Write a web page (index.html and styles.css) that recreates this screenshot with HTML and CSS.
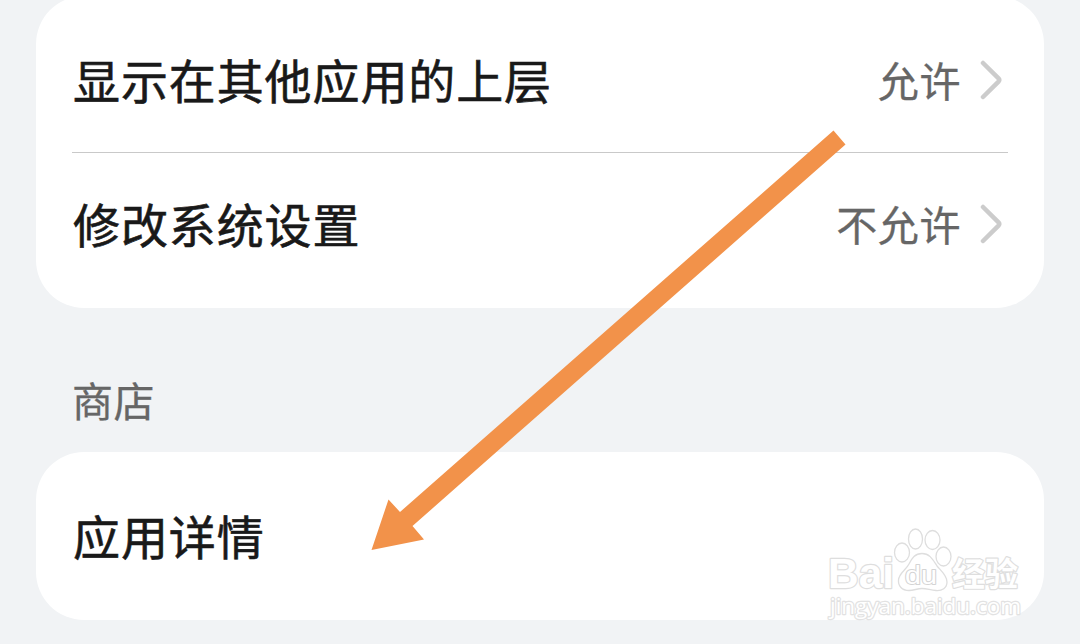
FILE: index.html
```html
<!DOCTYPE html>
<html lang="zh-CN">
<head>
  <meta charset="UTF-8">
  <meta name="viewport" content="width=device-width, initial-scale=1.0">
  <title>应用设置</title>
  <link rel="stylesheet" href="styles.css">
</head>
<body>

  <main class="settings">
    <section class="card">
      <div class="row">
        <span class="title">显示在其他应用的上层</span>
        <span class="value">允许</span>
        <svg class="chevron" width="24" height="42" viewBox="0 0 24 42">
          <path d="M3 4 L18.5 19.4 Q20 21 18.5 22.6 L3 38"/>
        </svg>
      </div>
      <div class="row">
        <span class="title">修改系统设置</span>
        <span class="value">不允许</span>
        <svg class="chevron" width="24" height="42" viewBox="0 0 24 42">
          <path d="M3 4 L18.5 19.4 Q20 21 18.5 22.6 L3 38"/>
        </svg>
      </div>
    </section>

    <h2 class="section-title">商店</h2>

    <section class="card">
      <div class="row">
        <span class="title">应用详情</span>
      </div>
    </section>
  </main>

  <!-- Arrow pointing at the details row -->
  <svg class="arrow" width="1080" height="644" viewBox="0 0 1080 644">
    <polygon points="833.5,130.5 845.5,144.5 412.5,526 424,539.5 371.5,550 388.5,499.5 400,512"/>
  </svg>

  <!-- Watermark -->
  <svg class="watermark" width="210" height="110" viewBox="820 520 210 110">
    <text class="brand" x="828" y="587.500" font-size="42" textLength="66" lengthAdjust="spacingAndGlyphs">Bai</text>
    <g class="paw">
      <ellipse cx="902" cy="552.500" rx="7.5" ry="9.5"/>
      <ellipse cx="915.500" cy="539" rx="7" ry="10"/>
      <ellipse cx="932.500" cy="540" rx="7.5" ry="9.5"/>
      <ellipse cx="943.500" cy="556.500" rx="7.5" ry="9.5"/>
      <path d="M922 563.500 m0 -10 C930 553.500 933 560 937 566 C941 571 947 575 947 582 C947 588 942 591 936 590.500 C930 590 927 588.500 922 588.500 C917 588.500 914 590.500 909 590.500 C902 590.500 898 586 898.500 580 C899 573 906 570 909 564 C912 558 915 553.500 922 553.500 Z"/>
    </g>
    <text class="du" x="905" y="583.500" font-size="26" textLength="32" lengthAdjust="spacingAndGlyphs">du</text>
    <text class="brand-cn" x="952" y="586" font-size="33">经验</text>
    <text class="site" x="830" y="614" font-size="22" textLength="191" lengthAdjust="spacingAndGlyphs">jingyan.baidu.com</text>
  </svg>

</body>
</html>
```
FILE: styles.css
```css
body {
  margin: 0;
  height: 644px;
  overflow: hidden;
  background-color: #f1f3f5;
  font-family: "Noto Sans CJK SC", sans-serif;
  color: #191919;
}

.settings {
  margin: -4px 36px 0;
}

.card {
  background-color: #fff;
  border-radius: 48px;
  padding: 12px 36px;
}

.row {
  box-sizing: border-box;
  display: flex;
  align-items: center;
  height: 144px;
}

.row + .row {
  border-top: 1px solid #c9c9c9;
}

.title {
  flex: 1;
  padding: 0 0 3px 1px;
  font-size: 47px;
  line-height: 72px;
  letter-spacing: 0.9px;
  -webkit-text-stroke: 0.6px #191919;
}

.value {
  padding-bottom: 3px;
  font-size: 41px;
  line-height: 60px;
  letter-spacing: 0.6px;
  color: #666;
  -webkit-text-stroke: 0.3px #666;
}

.chevron {
  margin: 0 4px 1px 19px;
}

.chevron path {
  fill: none;
  stroke: #ccc;
  stroke-width: 4.5;
  stroke-linecap: round;
}

.section-title {
  box-sizing: border-box;
  margin: 0;
  height: 144px;
  padding: 61px 36px 0;
  font-size: 41px;
  font-weight: 400;
  line-height: 60px;
  letter-spacing: 0.6px;
  color: #666;
  -webkit-text-stroke: 0.3px #666;
}

.arrow {
  position: absolute;
  left: 0;
  top: 0;
  fill: #f2924a;
}

.watermark {
  position: absolute;
  left: 820px;
  top: 520px;
  fill: #fff;
  stroke: #dedede;
  stroke-width: 1.3;
}

.watermark text {
  paint-order: stroke;
  stroke-width: 2.4;
  stroke-linejoin: round;
}

.brand,
.du {
  font-family: "Liberation Sans", sans-serif;
  font-weight: 700;
}

.watermark .du {
  stroke: #d4d4d4;
  stroke-width: 2;
  font-weight: 400;
}

.brand-cn {
  font-weight: 700;
}

.watermark .site {
  font-family: "Open Sans", sans-serif;
  stroke: #e2e2e2;
}
```
